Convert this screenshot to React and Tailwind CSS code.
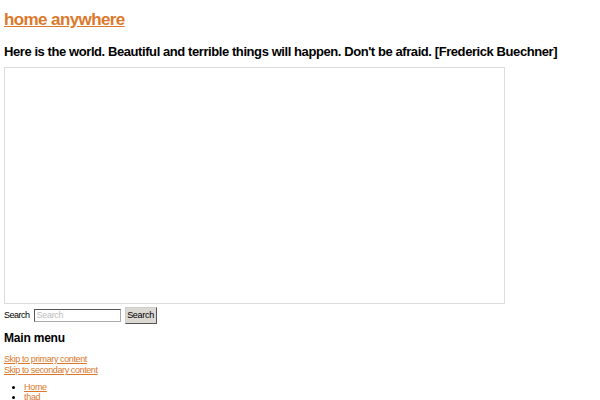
export default function App() {
  return (
    <div className="min-h-[400px] bg-white px-1 font-['Liberation_Sans',Arial,sans-serif] text-black">
      <h1 className="pt-[10px] text-[17px] font-bold leading-[20px] tracking-[-0.6px]">
        <a href="#" className="text-[#dc782b] underline">
          home anywhere
        </a>
      </h1>
      <p className="mt-[14px] whitespace-nowrap text-[13px] font-bold leading-[16px] tracking-[-0.42px]">
        Here is the world. Beautiful and terrible things will happen. Don't be afraid. [Frederick Buechner]
      </p>
      <div className="mt-[7px] h-[237px] w-[501px] border border-[#dcdcdc]" />
      <div className="mt-[3px] flex items-center text-[9px]">
        <span className="tracking-[-0.5px]">Search</span>
        <input
          placeholder="Search"
          className="ml-[4px] h-[13px] w-[87px] border border-[#aaa] border-t-[#555] border-l-[#555] px-[2px] text-[9px] tracking-[-0.3px] placeholder:text-[#bbb]"
        />
        <button className="ml-[4px] h-[17px] w-[32px] border border-[#ccc] border-b-[#555] border-r-[#555] bg-[#dcd8d2] text-[9px] tracking-[-0.3px]">
          Search
        </button>
      </div>
      <h2 className="mt-[7px] text-[12px] font-bold leading-[14px] tracking-[-0.2px]">Main menu</h2>
      <div className="mt-[9px] text-[9px] leading-[11px] tracking-[-0.4px]">
        <a href="#" className="block text-[#dc782b] underline">
          Skip to primary content
        </a>
        <a href="#" className="block text-[#dc782b] underline">
          Skip to secondary content
        </a>
      </div>
      <ul className="mt-[6px] list-disc pl-[20px] text-[9px] leading-[10px] tracking-[-0.3px]">
        <li>
          <a href="#" className="text-[#dc782b] underline">Home</a>
        </li>
        <li>
          <a href="#" className="text-[#dc782b] underline">thad</a>
        </li>
      </ul>
    </div>
  );
}
